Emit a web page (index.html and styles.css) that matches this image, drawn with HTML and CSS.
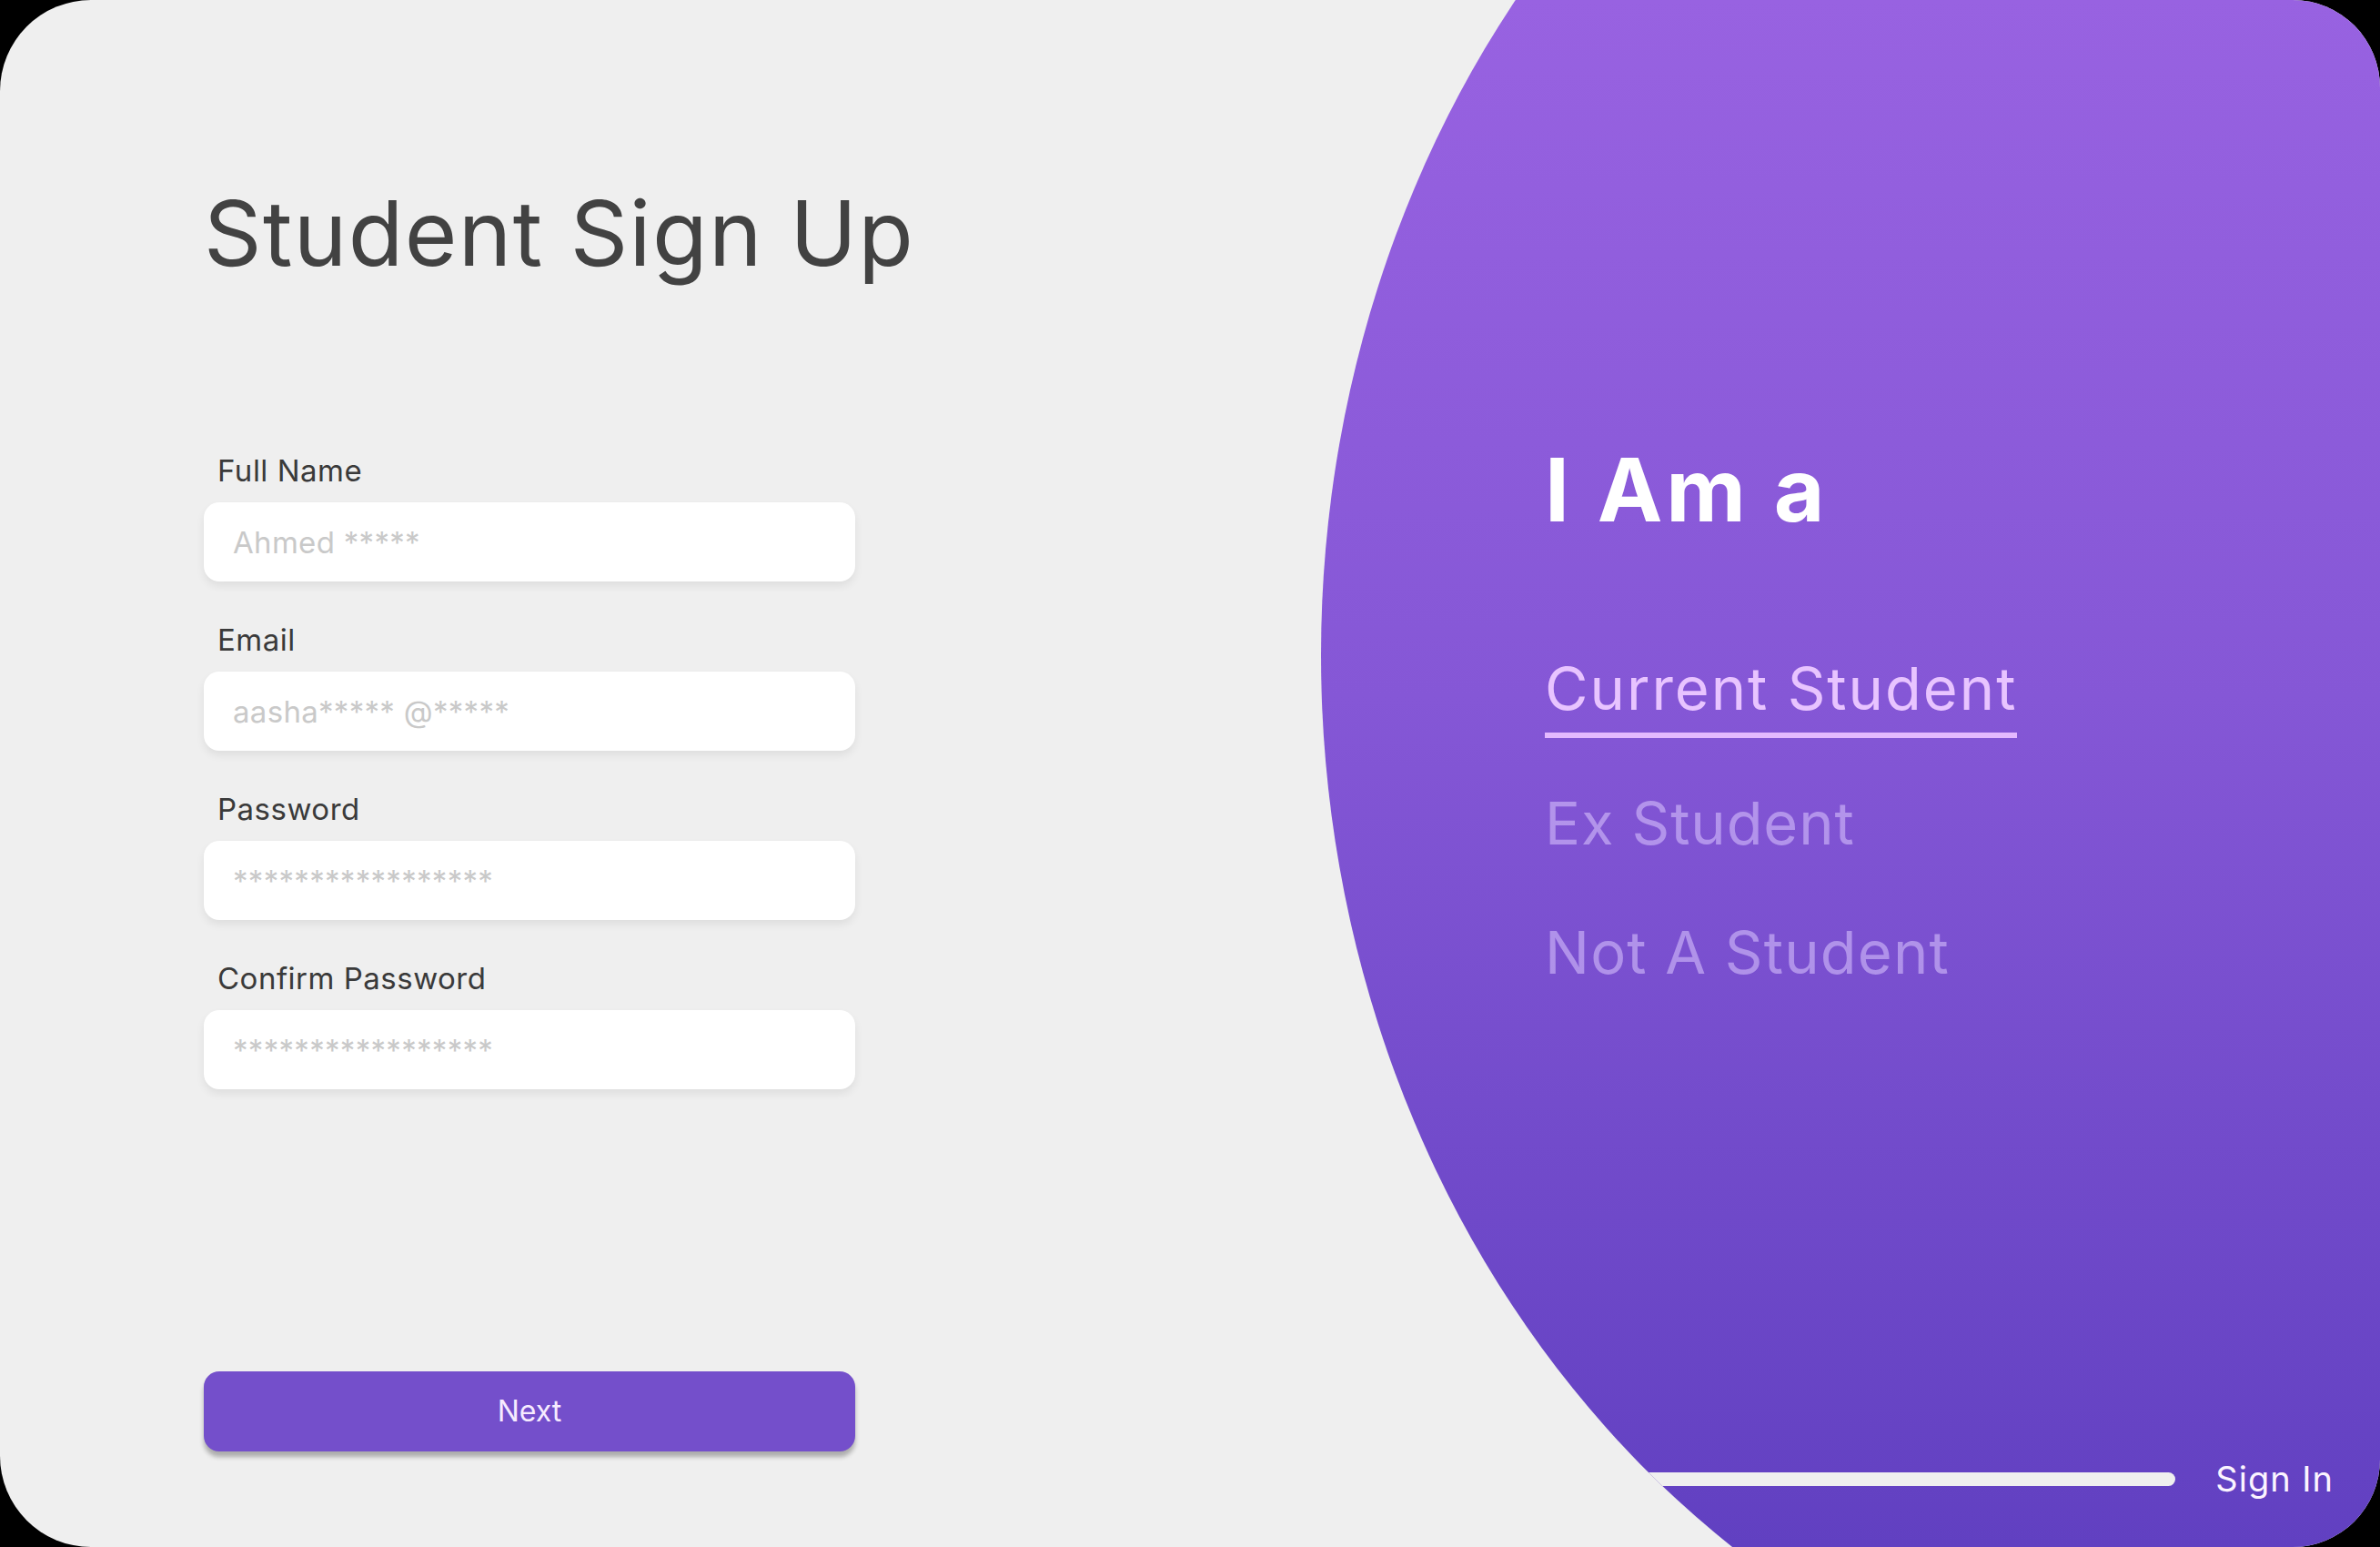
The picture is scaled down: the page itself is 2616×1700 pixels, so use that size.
FILE: index.html
```html
<!DOCTYPE html>
<html lang="en">
<head>
<meta charset="utf-8">
<title>Student Sign Up</title>
<link rel="stylesheet" href="styles.css">
</head>
<body>
<div class="card">
  <section class="form-side">
    <h1 class="title">Student Sign Up</h1>
    <form class="form">
      <div class="field">
        <label class="label">Full Name</label>
        <div class="input"><span class="ph">Ahmed *****</span></div>
      </div>
      <div class="field">
        <label class="label">Email</label>
        <div class="input"><span class="ph">aasha***** @*****</span></div>
      </div>
      <div class="field">
        <label class="label">Password</label>
        <div class="input"><span class="ph">*****************</span></div>
      </div>
      <div class="field">
        <label class="label">Confirm Password</label>
        <div class="input"><span class="ph">*****************</span></div>
      </div>
    </form>
    <button class="next" type="button">Next</button>
  </section>
  <aside class="role-side">
    <h2 class="role-title">I Am a</h2>
    <ul class="roles">
      <li class="role active">Current Student</li>
      <li class="role">Ex Student</li>
      <li class="role">Not A Student</li>
    </ul>
    <div class="signin-row">
      <div class="bar"></div>
      <span class="signin">Sign In</span>
    </div>
  </aside>
</div>
</body>
</html>
```

FILE: styles.css
```css
* { box-sizing: border-box; }
html, body { margin: 0; padding: 0; }
body {
  background: #000;
  width: 2616px;
  height: 1700px;
  overflow: hidden;
  font-family: Inter, "Noto Sans", "Liberation Sans", sans-serif;
}
.card {
  width: 2616px;
  height: 1700px;
  background: #efefef;
  border-radius: 100px 96px 96px 100px;
  overflow: hidden;
  display: flex;
}
.form-side {
  width: 1448px;
  flex: none;
  padding-left: 224px;
  display: flex;
  flex-direction: column;
}
.title {
  margin: 207px 0 0 0;
  font-size: 99px;
  line-height: 1;
  font-weight: 400;
  color: #424242;
  letter-spacing: 1.4px;
}
.form {
  margin-top: 194px;
  width: 716px;
  display: flex;
  flex-direction: column;
  gap: 47px;
}
.field {
  display: flex;
  flex-direction: column;
  gap: 18px;
}
.label {
  font-size: 33px;
  line-height: 34px;
  color: #3a3a3a;
  padding-left: 15px;
  letter-spacing: 0.5px;
}
.input {
  height: 87px;
  background: #fff;
  border-radius: 17px;
  box-shadow: 0 5px 10px rgba(0,0,0,0.07);
  display: flex;
  align-items: center;
  padding-left: 32px;
}
.ph {
  font-size: 33px;
  color: #c9c9c9;
  letter-spacing: 0.3px;
}
.next {
  margin-top: 310px;
  width: 716px;
  height: 88px;
  border: none;
  border-radius: 17px;
  background: #744fcb;
  color: #f6ebff;
  font-family: inherit;
  font-size: 32px;
  box-shadow: 0 6px 5px rgba(0,0,0,0.28);
  padding: 0 0 2px 0;
}
.role-side {
  flex: 1;
  background: linear-gradient(to bottom, #9862e1 0%, #8557d6 45%, #6140c1 100%);
  clip-path: ellipse(1069px 1200px at 1073px 720px);
  display: flex;
  flex-direction: column;
  padding: 490px 0 55px 250px;
}
.role-title {
  margin: 0;
  font-size: 96px;
  line-height: 1;
  font-weight: 700;
  color: #fff;
  letter-spacing: 4px;
}
.roles {
  list-style: none;
  margin: 138px 0 0 0;
  padding: 0;
  display: flex;
  flex-direction: column;
  align-items: flex-start;
}
.role {
  font-size: 65px;
  line-height: 1;
  color: rgba(220, 200, 255, 0.55);
  margin-top: 61px;
  letter-spacing: 0.9px;
}
.role + .role + .role { margin-top: 77px; letter-spacing: 1.2px; }
.role.active {
  margin-top: 0;
  color: #e8c4ff;
  padding-bottom: 16px;
  border-bottom: 6px solid #e4b9ff;
  letter-spacing: 2px;
}
.signin-row {
  margin-top: auto;
  display: flex;
  align-items: center;
  margin-left: -250px;
  padding-right: 51px;
  gap: 44px;
  height: 40px;
}
.bar {
  flex: 1;
  height: 15px;
  background: #efefef;
  border-radius: 0 8px 8px 0;
}
.signin {
  font-size: 38px;
  line-height: 1;
  color: #fbf4ff;
  letter-spacing: 1px;
}
```
